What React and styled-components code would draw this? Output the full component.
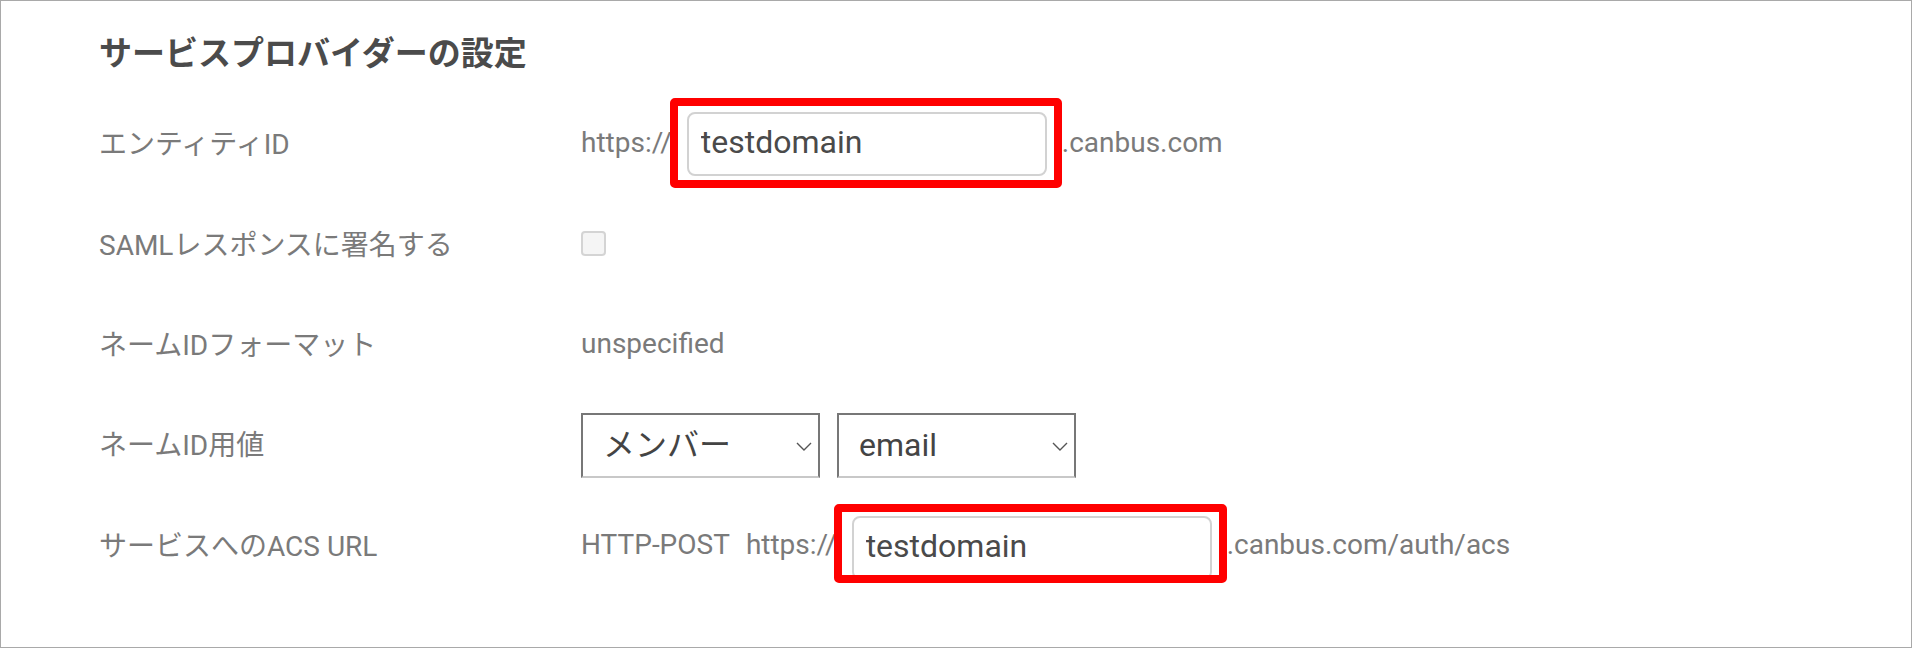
import styled, { createGlobalStyle } from "styled-components";

const GlobalStyle = createGlobalStyle`
  html, body {
    margin: 0;
    padding: 0;
    background: #fff;
  }
  body {
    font-family: Roboto, "Noto Sans CJK JP", sans-serif;
  }
`;

const Panel = styled.div`
  box-sizing: border-box;
  width: 1912px;
  height: 648px;
  border: 1px solid #a9a9a9;
  padding: 33px 0 0 98px;
  font-family: Roboto, "Noto Sans CJK JP", sans-serif;
`;

const Title = styled.h2`
  margin: 0 0 18px;
  font-size: 33px;
  line-height: 40px;
  font-weight: 700;
  color: #4b4b4b;
`;

const Row = styled.div`
  display: grid;
  grid-template-columns: 482px 1fr;
  align-items: center;
  height: 100px;
  margin-top: ${(p) => p.$nudge || 0}px;
`;

const Label = styled.div`
  font-size: 28px;
  color: #7a7a7a;
`;

const Value = styled.div`
  display: flex;
  align-items: center;
  font-size: 28px;
  color: #7a7a7a;
`;

const Affix = styled.span`
  margin-right: ${(p) => p.$gap || 0}px;
  white-space: nowrap;
`;

// red annotation frame drawn over the input
const Marked = styled.span`
  position: relative;
  display: inline-flex;
  margin: ${(p) => p.$drop || 0}px 15px 0;

  &::after {
    content: "";
    position: absolute;
    inset: ${(p) => p.$inset};
    border: 8px solid #ff0000;
    border-radius: 5px;
    pointer-events: none;
  }
`;

const DomainInput = styled.input`
  box-sizing: border-box;
  width: 360px;
  height: 64px;
  margin: 0;
  padding: 0 0 4px 12px;
  border: 2px solid #d2d2d2;
  border-radius: 8px;
  background: #fff;
  font: 32px Roboto, sans-serif;
  color: #4a4a4a;
  outline: none;
`;

const Check = styled.input.attrs({ type: "checkbox" })`
  appearance: none;
  margin: 0;
  width: 25px;
  height: 25px;
  border: 2px solid #d4d4d4;
  border-radius: 4px;
  background: #f5f5f5;
`;

const SelectWrap = styled.div`
  position: relative;
  width: 239px;
  height: 65px;
  margin-top: 4px;

  & + & {
    margin-left: 17px;
  }
`;

const Select = styled.select`
  appearance: none;
  box-sizing: border-box;
  width: 100%;
  height: 100%;
  margin: 0;
  padding: 0 40px 0 20px;
  border: 2px solid #777;
  border-bottom-color: #c8c8c8;
  border-radius: 0;
  background: #fff;
  font: 32px Roboto, "Noto Sans CJK JP", sans-serif;
  color: #444;
  outline: none;
`;

const Chevron = styled.svg`
  position: absolute;
  right: 8px;
  top: 50%;
  margin-top: -3px;
  width: 16px;
  height: 9px;
  pointer-events: none;
`;

function Dropdown({ value, options }) {
  return (
    <SelectWrap>
      <Select defaultValue={value}>
        {options.map((o) => (
          <option key={o}>{o}</option>
        ))}
      </Select>
      <Chevron viewBox="0 0 16 9" fill="none">
        <path d="M1 1l7 7 7-7" stroke="#555" strokeWidth="1.4" />
      </Chevron>
    </SelectWrap>
  );
}

export default function App() {
  return (
    <>
      <GlobalStyle />
      <Panel>
        <Title>サービスプロバイダーの設定</Title>

        <Row>
          <Label>エンティティID</Label>
          <Value>
            <Affix>https://</Affix>
            <Marked $inset="-14px -15px -12px -17px" $drop={4}>
              <DomainInput defaultValue="testdomain" />
            </Marked>
            <Affix>.canbus.com</Affix>
          </Value>
        </Row>

        <Row $nudge={1}>
          <Label>SAMLレスポンスに署名する</Label>
          <Value>
            <Check />
          </Value>
        </Row>

        <Row>
          <Label>ネームIDフォーマット</Label>
          <Value>unspecified</Value>
        </Row>

        <Row>
          <Label>ネームID用値</Label>
          <Value>
            <Dropdown value="メンバー" options={["メンバー", "グループ"]} />
            <Dropdown value="email" options={["email", "name", "id"]} />
          </Value>
        </Row>

        <Row $nudge={1}>
          <Label>サービスへのACS URL</Label>
          <Value>
            <Affix $gap={16}>HTTP-POST</Affix>
            <Affix>https://</Affix>
            <Marked $inset="-12px -15px -3px -18px" $drop={8}>
              <DomainInput defaultValue="testdomain" />
            </Marked>
            <Affix>.canbus.com/auth/acs</Affix>
          </Value>
        </Row>
      </Panel>
    </>
  );
}
